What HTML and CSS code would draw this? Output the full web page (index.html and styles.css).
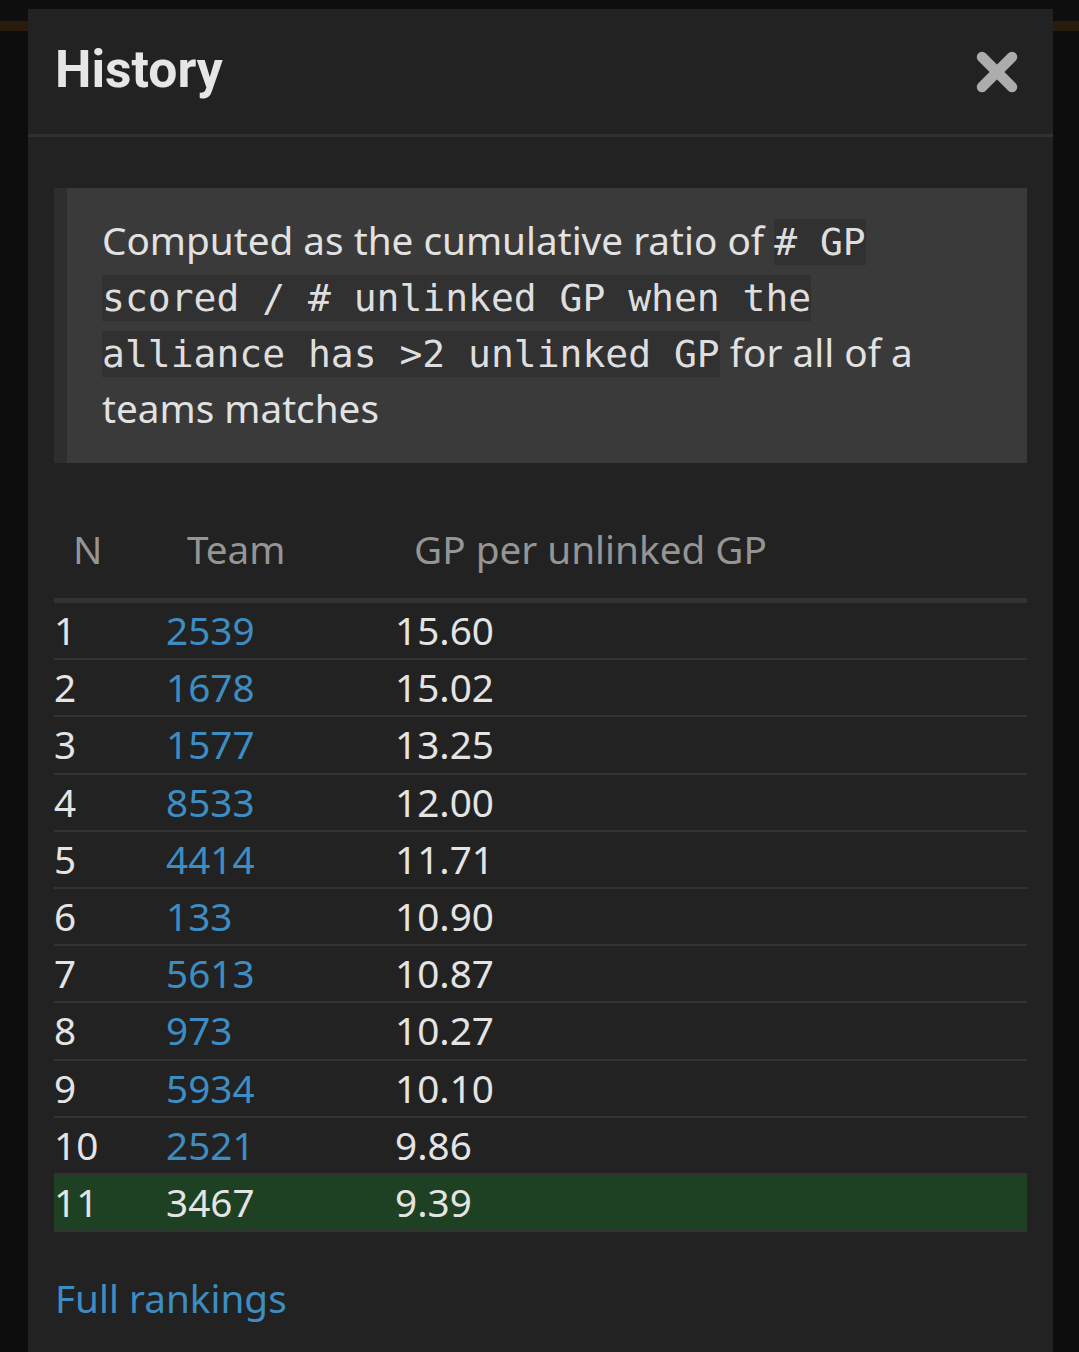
FILE: index.html
```html
<!DOCTYPE html>
<html>
<head>
<meta charset="utf-8">
<link rel="stylesheet" href="styles.css">
</head>
<body>
<div class="modal">
  <div class="modal-header">
    <h1 class="title">History</h1>
    <button class="close" aria-label="Close">
      <svg width="42" height="42" viewBox="0 0 42 42"><path d="M6 6 L36 36 M36 6 L6 36" stroke="#acacac" stroke-width="10.5" stroke-linecap="round" fill="none"/></svg>
    </button>
  </div>
  <div class="modal-body">
    <blockquote class="note">Computed as the cumulative ratio of <code># GP scored / # unlinked GP when the alliance has &gt;2 unlinked GP</code> for all of a teams matches</blockquote>
    <table class="ranks">
      <thead>
        <tr><th class="c-n">N</th><th class="c-team">Team</th><th>GP per unlinked GP</th></tr>
      </thead>
      <tbody>
        <tr><td>1</td><td><a href="#">2539</a></td><td>15.60</td></tr>
        <tr><td>2</td><td><a href="#">1678</a></td><td>15.02</td></tr>
        <tr><td>3</td><td><a href="#">1577</a></td><td>13.25</td></tr>
        <tr><td>4</td><td><a href="#">8533</a></td><td>12.00</td></tr>
        <tr><td>5</td><td><a href="#">4414</a></td><td>11.71</td></tr>
        <tr><td>6</td><td><a href="#">133</a></td><td>10.90</td></tr>
        <tr><td>7</td><td><a href="#">5613</a></td><td>10.87</td></tr>
        <tr><td>8</td><td><a href="#">973</a></td><td>10.27</td></tr>
        <tr><td>9</td><td><a href="#">5934</a></td><td>10.10</td></tr>
        <tr><td>10</td><td><a href="#">2521</a></td><td>9.86</td></tr>
        <tr class="current"><td>11</td><td>3467</td><td>9.39</td></tr>
      </tbody>
    </table>
    <p class="more"><a href="#">Full rankings</a></p>
  </div>
</div>
</body>
</html>
```

FILE: styles.css
```css
html, body {
  margin: 0;
  padding: 0;
  height: 1352px;
  overflow: hidden;
}
body {
  background: linear-gradient(to bottom, #0e0e0e 0, #0e0e0e 21px, #2a1b0f 21px, #2a1b0f 31px, #0d0d0d 31px, #0d0d0d 100%);
  font-family: "Noto Sans", "Open Sans", sans-serif;
  color: #e0e0e0;
}
.modal {
  margin: 9px 26px 0 28px;
  background: #222222;
  height: 1343px;
}
.modal-header {
  box-sizing: border-box;
  display: flex;
  align-items: center;
  justify-content: space-between;
  padding: 0 35px 0 27px;
  border-bottom: 3px solid #303030;
  height: 128px;
}
.title {
  margin: 0;
  font-family: Roboto, "Liberation Sans", sans-serif;
  font-weight: 700;
  font-size: 51.6px;
  color: #e6e6e6;
  line-height: 1.172;
  margin-top: -2px;
}
.close {
  background: none;
  border: 0;
  padding: 0;
  width: 42px;
  height: 42px;
  display: block;
}
.close svg { display: block; }
.modal-body {
  padding: 51px 26px 0 26px;
}
.note {
  margin: 0;
  background: #3a3a3a;
  border-left: 13px solid #2e2e2e;
  padding: 24px 32px 27px 35px;
  font-size: 38.7px;
  line-height: 56px;
  color: #e2e2e2;
}
.note code {
  font-family: "DejaVu Sans Mono", "Liberation Mono", monospace;
  font-size: 38px;
  line-height: 40px;
  background: #313131;
  padding: 1px 0;
  color: #dedede;
}
.ranks {
  margin-top: 37px;
  width: 100%;
  border-collapse: collapse;
  font-size: 38.7px;
}
.ranks th {
  text-align: left;
  font-weight: 400;
  color: #959595;
  line-height: 56px;
  padding: 21px 19px 21px 19px;
  border-bottom: 5px solid #333333;
}
.ranks th.c-n { width: 73px; }
.ranks th.c-team { width: 189px; padding-left: 22px; }
.ranks td {
  padding: 0;
  line-height: 55.2px;
  border-bottom: 2px solid #333333;
  color: #e4e4e4;
}
.ranks td:nth-child(2) { padding-left: 1px; }
.ranks a {
  color: #3d8dc3;
  text-decoration: none;
}
.ranks tr.current td {
  background: #1e4023;
}
.more {
  margin: 38px 0 0 1px;
  font-size: 38.7px;
  line-height: 56px;
}
.more a {
  color: #3d8dc3;
  text-decoration: none;
}
```
